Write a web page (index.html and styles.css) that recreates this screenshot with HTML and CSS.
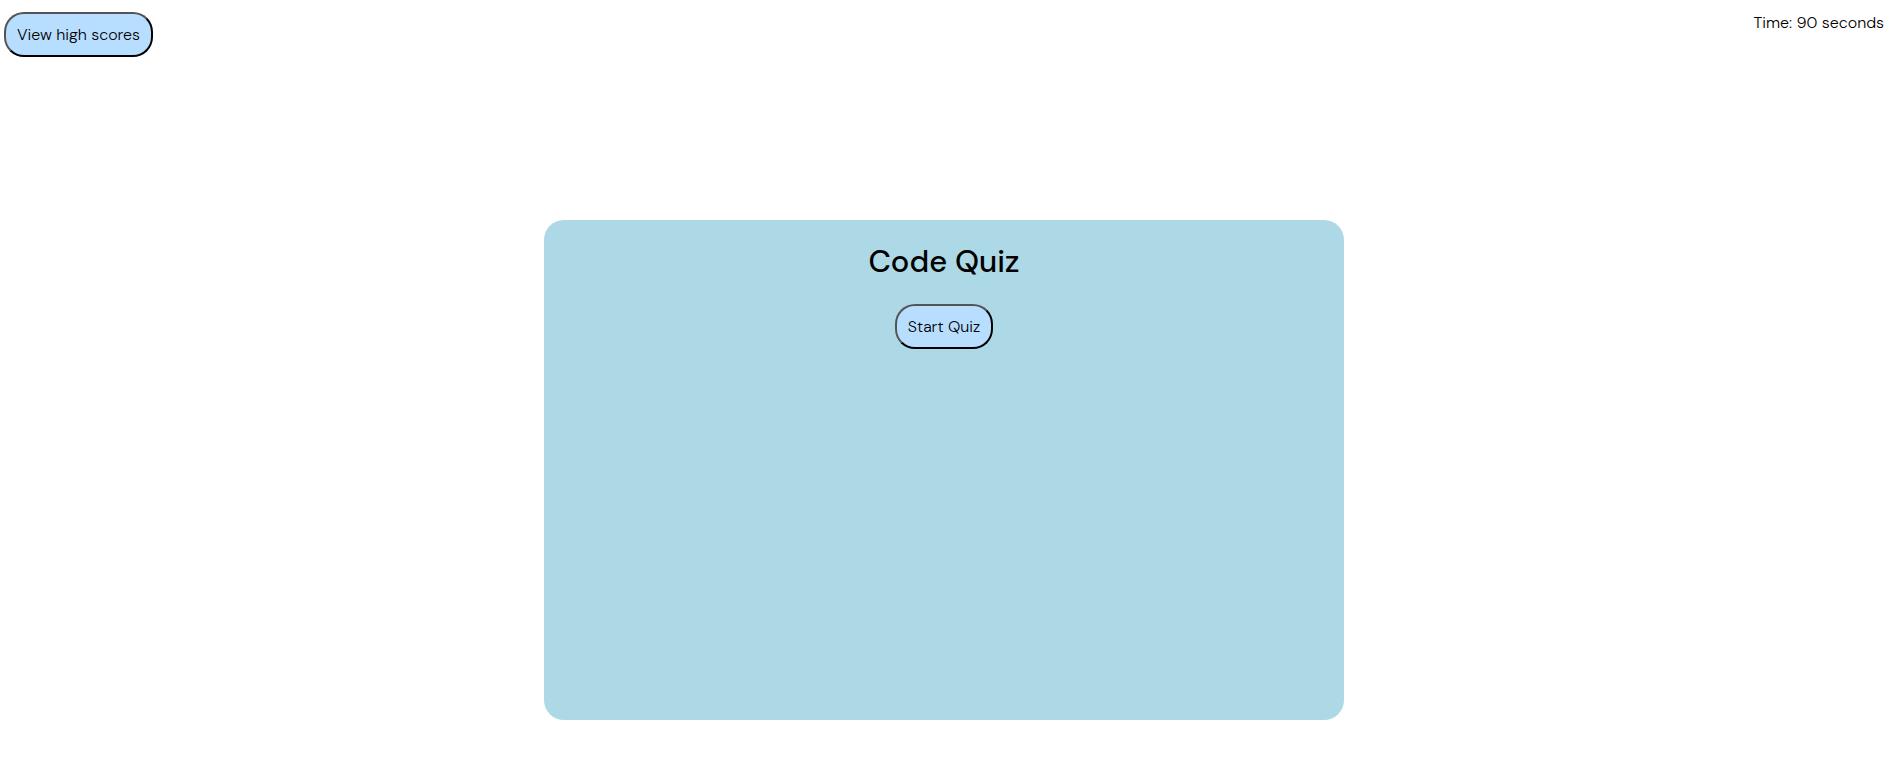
FILE: index.html
```html
<!DOCTYPE html>
<html lang="en">
<head>
<meta charset="utf-8">
<meta name="viewport" content="width=device-width, initial-scale=1">
<title>Code Quiz</title>
<link rel="stylesheet" href="styles.css">
</head>
<body>
<header class="topbar">
<button class="btn" type="button">View high scores</button>
<p class="timer">Time: 90 seconds</p>
</header>
<main class="quiz-card">
<h1 class="title">Code Quiz</h1>
<button class="btn" type="button">Start Quiz</button>
</main>
</body>
</html>
```
FILE: styles.css
```css
* {
  box-sizing: border-box;
}

body {
  margin: 0;
  padding: 12px 13px 0 4px;
  background: #ffffff;
  color: #000000;
  font: 300 16px/21px "DM Sans", Inter, sans-serif;
}

.topbar {
  display: flex;
  justify-content: space-between;
  align-items: flex-start;
}

.timer {
  margin: 0;
}

.btn {
  padding: 10px 11px;
  border: 2px outset #000000;
  border-radius: 20px;
  background: #b8deff;
  color: #000000;
  font: inherit;
  cursor: pointer;
}

.quiz-card {
  display: flex;
  flex-direction: column;
  align-items: center;
  gap: 21px;
  width: 100%;
  max-width: 800px;
  min-height: 500px;
  margin: 163px auto 0;
  padding-top: 21px;
  border-radius: 20px;
  background: #add8e6;
}

.title {
  margin: 0;
  font-size: 31px;
  font-weight: 500;
  line-height: 42px;
}
```
